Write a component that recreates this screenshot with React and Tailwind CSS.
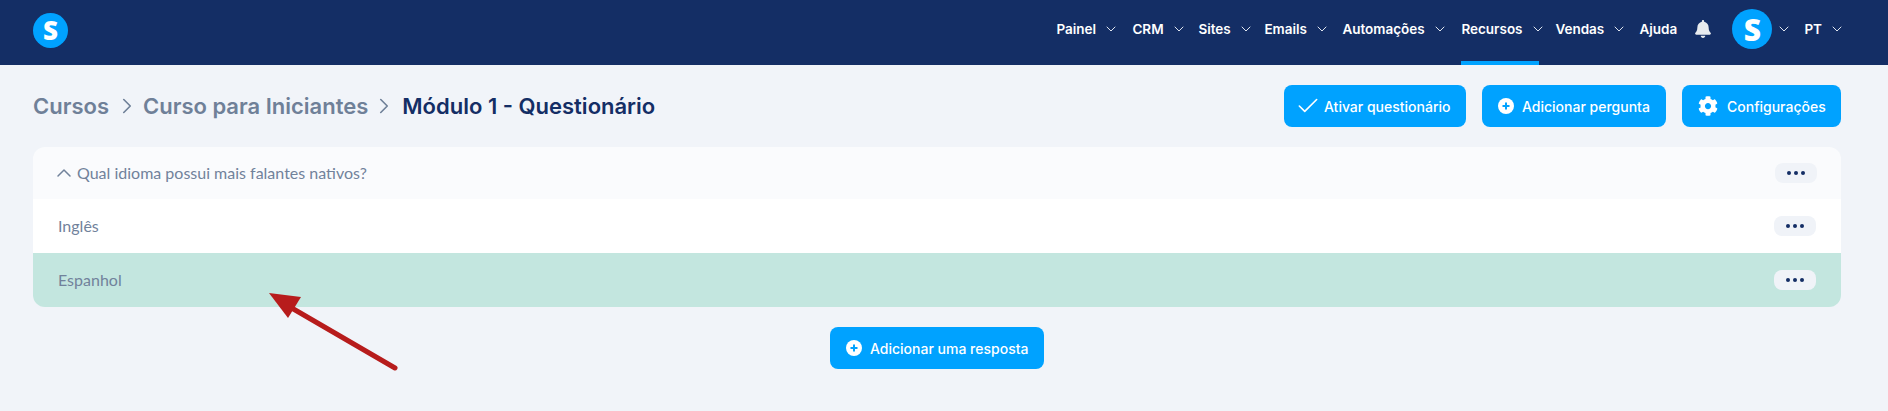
import React from "react";
import { ChevronDown, ChevronRight, ChevronUp, Check } from "lucide-react";
import { FaBell, FaCog } from "react-icons/fa";

const navItems = [
  { label: "Painel", caret: true, w: "w-[76px]" },
  { label: "CRM", caret: true, w: "w-[66px]" },
  { label: "Sites", caret: true, w: "w-[66px]" },
  { label: "Emails", caret: true, w: "w-[78px]" },
  { label: "Automações", caret: true, w: "w-[119px]" },
  { label: "Recursos", caret: true, w: "w-[94px]", active: true },
  { label: "Vendas", caret: true, w: "w-[84px]" },
  { label: "Ajuda", w: "w-[55px]" },
];

const Logo = ({ box, text }) => (
  <div className={`flex items-center justify-center rounded-full bg-[#00a2ff] text-white font-extrabold font-['Open_Sans',sans-serif] ${box} ${text}`}>
    S
  </div>
);

const Caret = ({ className = "" }) => (
  <ChevronDown className={`size-[16px] text-[#dfe5ef] ${className}`} strokeWidth={1.5} />
);

const PlusCircle = () => (
  <svg width="16" height="16" viewBox="0 0 16 16" className="shrink-0">
    <circle cx="8" cy="8" r="8" fill="#fff" />
    <path d="M8 4.5v7M4.5 8h7" stroke="#00a2ff" strokeWidth="2" />
  </svg>
);

const ActionButton = ({ icon, label, className }) => (
  <button className={`flex items-center h-[42px] rounded-lg bg-[#00a2ff] text-white text-[14px] font-medium ${className}`}>
    {icon}
    <span>{label}</span>
  </button>
);

const DotsButton = ({ className = "" }) => (
  <button className={`flex items-center justify-center gap-[3px] w-[42px] h-5 rounded-lg bg-[#f0f3f8] ${className}`}>
    <span className="size-[4px] rounded-full bg-[#142e65]" />
    <span className="size-[4px] rounded-full bg-[#142e65]" />
    <span className="size-[4px] rounded-full bg-[#142e65]" />
  </button>
);

const Row = ({ children, className = "" }) => (
  <div className={`flex items-center justify-between h-[54px] pl-[25px] pr-[25px] ${className}`}>
    <span>{children}</span>
    <DotsButton />
  </div>
);

export default function App() {
  return (
    <div className="relative min-h-[411px] bg-[#f1f4f9] font-['Inter',sans-serif]">
      <header className="flex items-center justify-between h-[65px] pl-[33px] pr-[43px] bg-[#142e65]">
        <div className="mb-1">
          <Logo box="size-[35px]" text="text-[26px]" />
        </div>
        <nav className="flex items-center h-full pb-[7px] text-white text-[13.5px] font-semibold">
          {navItems.map((item) => (
            <div key={item.label} className={`relative flex items-center h-full ${item.w}`}>
              <span>{item.label}</span>
              {item.caret && <Caret className="ml-[7px]" />}
              {item.active && <span className="absolute -bottom-[7px] left-0 w-[78px] h-1 bg-[#00a2ff]" />}
            </div>
          ))}
          <FaBell className="size-[18px] text-[#e8ebee]" />
          <div className="ml-[20px]">
            <Logo box="size-10" text="text-[30px]" />
          </div>
          <Caret className="ml-[4px]" />
          <span className="ml-[12px]">PT</span>
          <Caret className="ml-[7px]" />
        </nav>
      </header>

      <main className="pl-[33px] pr-[47px] pt-5">
        <div className="flex items-center justify-between h-[42px]">
          <div className="flex items-center text-[22px] font-semibold text-[#6f8098]">
            <span>Cursos</span>
            <ChevronRight className="ml-[5px] mr-[3px] size-[26px]" strokeWidth={1.5} />
            <span>Curso para Iniciantes</span>
            <ChevronRight className="ml-[3px] mr-[5px] size-[26px]" strokeWidth={1.5} />
            <span className="text-[#142e65]">Módulo 1 - Questionário</span>
          </div>
          <div className="flex gap-4">
            <ActionButton
              className="w-[182px] pl-[11px] gap-[3px]"
              icon={<Check className="size-[26px]" strokeWidth={1.5} />}
              label="Ativar questionário"
            />
            <ActionButton
              className="w-[184px] pl-4 gap-2"
              icon={<PlusCircle />}
              label="Adicionar pergunta"
            />
            <ActionButton
              className="w-[159px] pl-4 gap-[9px]"
              icon={<FaCog className="size-[20px]" />}
              label="Configurações"
            />
          </div>
        </div>

        <section className="mt-5 rounded-xl overflow-hidden text-[16px] text-[#71829b] font-['Lato',sans-serif]">
          <div className="flex items-center justify-between h-[52px] pl-[19px] pr-[24px] bg-[#fafbfd]">
            <div className="flex items-center gap-[1px]">
              <ChevronUp className="size-[24px]" strokeWidth={1.5} />
              <span>Qual idioma possui mais falantes nativos?</span>
            </div>
            <DotsButton />
          </div>
          <Row className="bg-white">Inglês</Row>
          <Row className="bg-[#c3e6df]">Espanhol</Row>
        </section>

        <div className="flex justify-center mt-5">
          <ActionButton className="w-[214px] pl-4 gap-2" icon={<PlusCircle />} label="Adicionar uma resposta" />
        </div>
      </main>

      {/* annotation arrow on top of the screenshot */}
      <svg className="absolute left-0 top-0 pointer-events-none" width="420" height="380">
        <path d="M395 368L290 307" stroke="#b71c1c" strokeWidth="5" strokeLinecap="round" />
        <path d="M269 293L301 297L288 318Z" fill="#b71c1c" />
      </svg>
    </div>
  );
}
